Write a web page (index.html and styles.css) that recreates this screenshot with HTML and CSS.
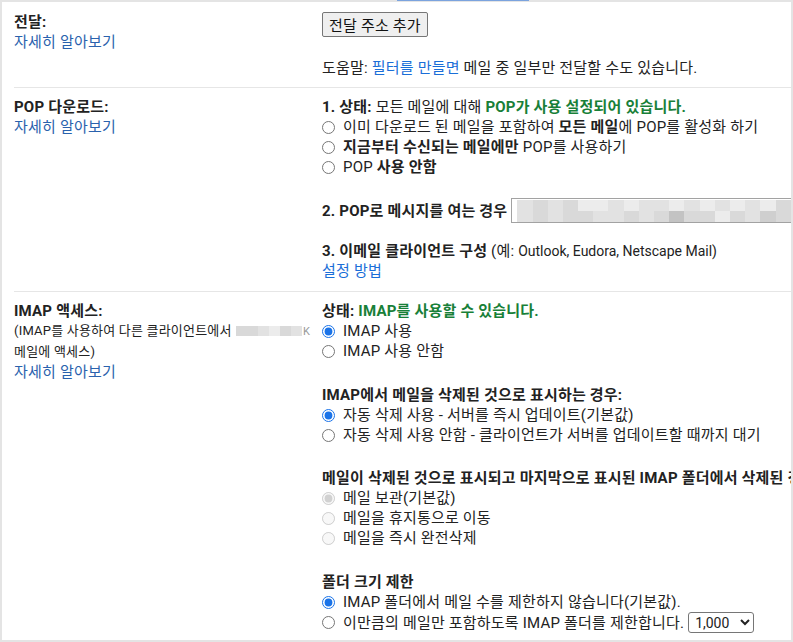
FILE: index.html
```html
<!DOCTYPE html>
<html lang="ko">
<head>
<meta charset="utf-8">
<title>전달 및 POP/IMAP</title>
<link rel="stylesheet" href="styles.css">
</head>
<body>
<div class="frame">
  <div class="topbar"><div class="tab-ind"></div></div>

  <section class="row row-first">
    <div class="label">
      <div class="title">전달:</div>
      <a class="learn" href="#">자세히 알아보기</a>
    </div>
    <div class="content">
      <button class="btn" type="button">전달 주소 추가</button>
      <p class="help">도움말: <a class="link" href="#">필터를 만들면</a> 메일 중 일부만 전달할 수도 있습니다.</p>
    </div>
  </section>

  <section class="row">
    <div class="label">
      <div class="title">POP 다운로드:</div>
      <a class="learn" href="#">자세히 알아보기</a>
    </div>
    <div class="content">
      <div class="grp">
        <div class="line"><b>1. 상태:</b> 모든 메일에 대해 <b class="ok">POP가 사용 설정되어 있습니다.</b></div>
        <label class="opt"><input type="radio" name="pop">이미 다운로드 된 메일을 포함하여&nbsp;<b>모든 메일</b>에 POP를 활성화 하기</label>
        <label class="opt"><input type="radio" name="pop"><b>지금부터 수신되는 메일에만</b>&nbsp;POP를 사용하기</label>
        <label class="opt"><input type="radio" name="pop">POP&nbsp;<b>사용 안함</b></label>
      </div>
      <div class="field-row">
        <b>2. POP로 메시지를 여는 경우</b>
        <div class="blurbox">
          <i class="s2"></i><i class="s3"></i><i class="s2"></i><i class="s3"></i><i class="s1"></i><i class="s1"></i><i class="s2"></i><i class="s1"></i><i class="s2"></i><i class="s2"></i><i class="s1"></i><i class="s2"></i><i class="s1"></i><i class="s2"></i><i class="s1"></i><i class="s2"></i><i class="s1"></i><i class="s3"></i>
          <i class="s2"></i><i class="s3"></i><i class="s2"></i><i class="s3"></i><i class="s3"></i><i class="s2"></i><i class="s2"></i><i class="s3"></i><i class="s2"></i><i class="s3"></i><i class="s5"></i><i class="s3"></i><i class="s3"></i><i class="s1"></i><i class="s3"></i><i class="s2"></i><i class="s4"></i><i class="s3"></i>
        </div>
      </div>
      <div class="grp grp-cfg">
        <div class="line"><b>3. 이메일 클라이언트 구성</b> (예: <span class="en">Outlook, Eudora, Netscape Mail)</span></div>
        <div class="line"><a class="link" href="#">설정 방법</a></div>
      </div>
    </div>
  </section>

  <section class="row row-last">
    <div class="label">
      <div class="title">IMAP 액세스:</div>
      <div class="small">(IMAP를 사용하여 다른 클라이언트에서 <span class="blur-mail"><i class="s3"></i><i class="s3"></i><i class="s2"></i><i class="s1"></i><i class="s3"></i><i class="s2"></i></span><span class="k">K</span></div>
      <div class="small">메일에 액세스)</div>
      <a class="learn" href="#">자세히 알아보기</a>
    </div>
    <div class="content">
      <div class="grp">
        <div class="line"><b>상태:</b> <b class="ok">IMAP를 사용할 수 있습니다.</b></div>
        <label class="opt"><input type="radio" name="imap" checked>IMAP 사용</label>
        <label class="opt"><input type="radio" name="imap">IMAP 사용 안함</label>
      </div>
      <div class="grp grp-2">
        <div class="line"><b>IMAP에서 메일을 삭제된 것으로 표시하는 경우:</b></div>
        <label class="opt"><input type="radio" name="del" checked>자동 삭제 사용 - 서버를 즉시 업데이트(기본값)</label>
        <label class="opt"><input type="radio" name="del">자동 삭제 사용 안함 - 클라이언트가 서버를 업데이트할 때까지 대기</label>
      </div>
      <div class="grp grp-3">
        <div class="line"><b>메일이 삭제된 것으로 표시되고 마지막으로 표시된 IMAP 폴더에서 삭제된 경우:</b></div>
        <label class="opt"><input type="radio" name="exp" checked disabled>메일 보관(기본값)</label>
        <label class="opt"><input type="radio" name="exp" disabled>메일을 휴지통으로 이동</label>
        <label class="opt"><input type="radio" name="exp" disabled>메일을 즉시 완전삭제</label>
      </div>
      <div class="grp grp-4">
        <div class="line"><b>폴더 크기 제한</b></div>
        <label class="opt"><input type="radio" name="lim" checked>IMAP 폴더에서 메일 수를 제한하지 않습니다(기본값).</label>
        <label class="opt opt-sel"><input type="radio" name="lim">이만큼의 메일만 포함하도록 IMAP 폴더를 제한합니다.
          <select class="sel"><option>1,000</option><option>2,000</option><option>5,000</option><option>10,000</option></select>
        </label>
      </div>
    </div>
  </section>
</div>
</body>
</html>
```
FILE: styles.css
```css
* { box-sizing: border-box; }
html, body { margin: 0; padding: 0; overflow: hidden; background: #fff; }
body {
  font-family: Roboto, "Noto Sans CJK KR", sans-serif;
  font-size: 15px;
  line-height: 20px;
  letter-spacing: 0.2px;
  color: #222;
}
b { font-weight: 700; }
.en { font-size: 14px; letter-spacing: 0; }
.frame {
  width: 793px;
  height: 642px;
  border-left: 2px solid #e4e4e4;
  border-right: 2px solid #e4e4e4;
  border-bottom: 2px solid #e4e4e4;
  overflow: hidden;
}
.topbar { height: 2px; background: #e4e4e4; margin: 0 -2px; }
.tab-ind { margin-left: 397px; width: 132px; height: 1px; background: #7ba3de; }

.row {
  display: grid;
  grid-template-columns: 308px minmax(0, 1fr);
  margin-left: 12px;
  border-top: 1px solid #e6e6e6;
  padding: 9px 0 10px;
}
.row-first { border-top: 0; padding: 10px 0 9px; }
.row-last { padding-bottom: 0; }

.label .title { font-weight: 700; }
.learn { color: #2a62ad; text-decoration: none; }
.link { color: #1a6ed8; text-decoration: none; }
.small { font-size: 13px; white-space: nowrap; }
.blur-mail { display: inline-flex; vertical-align: -1px; height: 10px; margin-left: 1px; }
.blur-mail i { display: block; width: 11px; height: 10px; }
.k { color: #9a9a9a; font-size: 11px; margin-left: 1px; }

.content { white-space: nowrap; }
.btn {
  display: block;
  height: 25px;
  padding: 0 6px;
  font: 15px Roboto, "Noto Sans CJK KR", sans-serif;
  letter-spacing: 0.2px;
  color: #111;
  background: #efefef;
  border: 1px solid #767676;
  border-radius: 2px;
}
.help { margin: 21px 0 0; }
.ok { color: #188038; }
.line { height: 20px; }
.opt { display: flex; align-items: center; height: 20px; }
.opt input {
  margin: 0 8px 0 0;
  width: 13px;
  height: 13px;
  flex: none;
  accent-color: #1a73e8;
}
.field-row { display: flex; align-items: center; height: 25px; margin-top: 21px; }
.blurbox {
  flex: none;
  width: 300px;
  height: 25px;
  margin-left: 4px;
  border: 1px solid #a2a2a2;
  border-right: 0;
  padding: 1px 0 0 5px;
  display: grid;
  grid-template-columns: repeat(18, 15.2px);
  grid-template-rows: 11px 11px;
}
.blurbox i { display: block; }
.s1 { background: #ececec; }
.s2 { background: #e2e2e2; }
.s3 { background: #d9d9d9; }
.s4 { background: #cfcfcf; }
.s5 { background: #c3c3c3; }
.grp-cfg { margin-top: 18px; }
.grp-2 { margin-top: 24px; }
.grp-3 { margin-top: 23px; }
.grp-4 { margin-top: 24px; }
.opt-sel { height: 21px; }
.sel {
  height: 21px;
  width: 66px;
  margin-left: 4px;
  font: 14px Roboto, "Noto Sans CJK KR", sans-serif;
  color: #222;
  background: #fff;
  border: 1px solid #767676;
  border-radius: 3px;
  padding: 0 2px;
}
```
